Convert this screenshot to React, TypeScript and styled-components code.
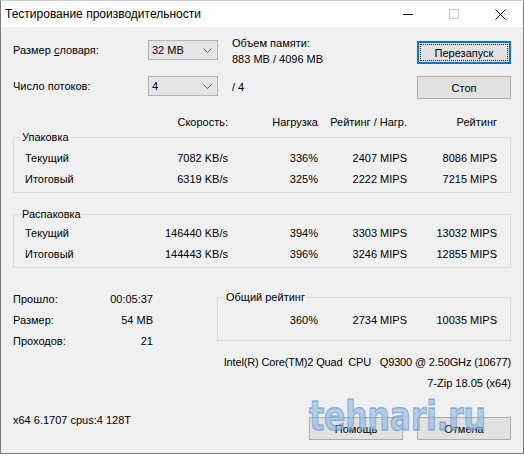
import styled, { createGlobalStyle } from 'styled-components';

const GlobalStyle = createGlobalStyle`
  html, body {
    margin: 0;
    padding: 0;
    background: #ffffff;
  }
  body {
    font-family: "Liberation Sans", Arial, sans-serif;
    font-size: 11px;
    color: #000;
  }
`;

const COLS = '103px 100px 90px 89px 90px';

const Window = styled.div`
  position: relative;
  width: 524px;
  height: 454px;
  box-sizing: border-box;
  border: 1px solid #7a7a7a;
  border-top-color: #d0d0d0;
  background: #f0f0f0;
  display: flex;
  flex-direction: column;
  overflow: hidden;
`;

const TitleBar = styled.div`
  height: 26px;
  background: #ffffff;
  display: flex;
  align-items: center;
`;

const Title = styled.div`
  flex: 1;
  padding-left: 4px;
  font-size: 12px;
  line-height: 16px;
`;

const CaptionButton = styled.div`
  width: 46px;
  height: 26px;
  display: flex;
  align-items: center;
  justify-content: center;
`;

const Body = styled.div`
  flex: 1;
  display: flex;
  flex-direction: column;
  padding: 13px 12px 13px 12px;
`;

const Top = styled.div`
  display: flex;
  align-items: flex-start;
`;

const Controls = styled.div`
  display: grid;
  grid-template-columns: 135px 70px auto;
  grid-template-rows: 20px 20px;
  row-gap: 16px;
  align-items: center;
`;

const Combo = styled.div`
  height: 20px;
  box-sizing: border-box;
  border: 1px solid #b4b4b4;
  background: #e5e5e5;
  display: flex;
  align-items: center;
  justify-content: space-between;
  padding: 0 5px 0 3px;
`;

const Info = styled.div<{ $lines?: number }>`
  margin-left: 14px;
  line-height: 16px;
  white-space: nowrap;
  margin-top: ${(p) => (p.$lines === 2 ? '2px' : '1px')};
`;

const ButtonColumn = styled.div`
  margin-left: auto;
  margin-top: 1px;
  display: flex;
  flex-direction: column;
  gap: 12px;
`;

const Button = styled.div<{ $focused?: boolean }>`
  width: 94px;
  height: 23px;
  box-sizing: border-box;
  border: 1px solid ${(p) => (p.$focused ? '#0078d7' : '#adadad')};
  box-shadow: ${(p) => (p.$focused ? 'inset 0 0 0 1px #0078d7' : 'none')};
  outline: ${(p) => (p.$focused ? '1px dotted #222' : 'none')};
  outline-offset: -4px;
  background: #e1e1e1;
  display: flex;
  align-items: center;
  justify-content: center;
`;

const Header = styled.div`
  display: grid;
  grid-template-columns: ${COLS};
  margin-top: 16px;
  padding-left: 12px;
  line-height: 14px;
  white-space: nowrap;
`;

const Cell = styled.div<{ $right?: boolean }>`
  text-align: ${(p) => (p.$right ? 'right' : 'left')};
  white-space: nowrap;
`;

const Group = styled.fieldset<{ $gap?: number; $top?: number }>`
  margin: ${(p) => p.$gap ?? 0}px 0 0 0;
  padding: ${(p) => p.$top ?? 2}px 11px 3px 11px;
  border: 1px solid #dcdcdc;
  min-width: 0;
`;

const Legend = styled.legend`
  padding: 0 1px;
  margin-left: -4px;
  line-height: 16px;
`;

const Row = styled.div<{ $cols?: string }>`
  display: grid;
  grid-template-columns: ${(p) => p.$cols ?? COLS};
  height: 21px;
  align-items: center;
`;

const Bottom = styled.div`
  display: flex;
  margin-top: 21px;
`;

const Stats = styled.div`
  width: 204px;
  flex-shrink: 0;
  margin-top: -1px;
`;

const RightColumn = styled.div`
  flex: 1;
  min-width: 0;
  display: flex;
  flex-direction: column;
`;

const TotalGroup = styled.fieldset`
  margin: 0;
  padding: 4px 12px 10px 0;
  border: 1px solid #dcdcdc;
  min-width: 0;
`;

const TotalLegend = styled.legend`
  padding: 0 1px;
  margin-left: 7px;
  line-height: 16px;
`;

const InfoLines = styled.div`
  margin-top: 11px;
  display: flex;
  flex-direction: column;
  align-items: flex-end;
  line-height: 21px;
  white-space: nowrap;
`;

const CpuLine = styled.div`
  letter-spacing: -0.15px;
`;

const Footer = styled.div`
  margin-top: auto;
  display: flex;
  align-items: flex-start;
`;

const FooterText = styled.div`
  margin-top: -5px;
  line-height: 16px;
`;

const FooterButtons = styled.div`
  margin-left: auto;
  display: flex;
  gap: 14px;
`;

const Watermark = styled.div`
  position: absolute;
  left: 308px;
  top: 391px;
  font-family: "DejaVu Sans", Verdana, sans-serif;
  font-weight: 700;
  font-size: 32px;
  line-height: 36px;
  letter-spacing: -0.5px;
  color: rgba(140, 182, 228, 0.6);
  -webkit-text-stroke: 1px rgba(70, 130, 200, 0.5);
  transform: scaleY(1.3);
  transform-origin: top left;
  pointer-events: none;
`;

const Chevron = () => (
  <svg width="9" height="5" viewBox="0 0 9 5">
    <path d="M0.5 0.5 L4.5 4.5 L8.5 0.5" fill="none" stroke="#606060" strokeWidth="1" />
  </svg>
);

const sections = [
  {
    name: 'Упаковка',
    rows: [
      ['Текущий', '7082 KB/s', '336%', '2407 MIPS', '8086 MIPS'],
      ['Итоговый', '6319 KB/s', '325%', '2222 MIPS', '7215 MIPS'],
    ],
  },
  {
    name: 'Распаковка',
    rows: [
      ['Текущий', '146440 KB/s', '394%', '3303 MIPS', '13032 MIPS'],
      ['Итоговый', '144443 KB/s', '396%', '3246 MIPS', '12855 MIPS'],
    ],
  },
];

const stats = [
  ['Прошло:', '00:05:37'],
  ['Размер:', '54 MB'],
  ['Проходов:', '21'],
];

export default function App() {
  return (
    <>
      <GlobalStyle />
      <Window>
        <TitleBar>
          <Title>Тестирование производительности</Title>
          <CaptionButton>
            <svg width="10" height="10" viewBox="0 0 10 10">
              <path d="M0 5.5 H10" stroke="#000" strokeWidth="1" />
            </svg>
          </CaptionButton>
          <CaptionButton>
            <svg width="10" height="10" viewBox="0 0 10 10">
              <rect x="0.5" y="0.5" width="9" height="9" fill="none" stroke="#c8c8c8" strokeWidth="1" />
            </svg>
          </CaptionButton>
          <CaptionButton>
            <svg width="11" height="11" viewBox="0 0 11 11">
              <path d="M0.5 0.5 L10.5 10.5 M10.5 0.5 L0.5 10.5" stroke="#000" strokeWidth="1" />
            </svg>
          </CaptionButton>
        </TitleBar>

        <Body>
          <Top>
            <Controls>
              <div>
                Размер <u>с</u>ловаря:
              </div>
              <Combo>
                <span>32 MB</span>
                <Chevron />
              </Combo>
              <Info $lines={2}>
                Объем памяти:
                <br />
                883 MB / 4096 MB
              </Info>
              <div>Число потоков:</div>
              <Combo>
                <span>4</span>
                <Chevron />
              </Combo>
              <Info>/ 4</Info>
            </Controls>
            <ButtonColumn>
              <Button $focused>Перезапуск</Button>
              <Button>Стоп</Button>
            </ButtonColumn>
          </Top>

          <Header>
            <Cell />
            <Cell $right>Скорость:</Cell>
            <Cell $right>Нагрузка</Cell>
            <Cell $right>Рейтинг / Нагр.</Cell>
            <Cell $right>Рейтинг</Cell>
          </Header>

          {sections.map((s, i) => (
            <Group key={s.name} $gap={i === 0 ? 0 : 13} $top={i === 0 ? 2 : 0}>
              <Legend>{s.name}</Legend>
              {s.rows.map((r) => (
                <Row key={r[0]}>
                  {r.map((v, j) => (
                    <Cell key={j} $right={j > 0}>
                      {v}
                    </Cell>
                  ))}
                </Row>
              ))}
            </Group>
          ))}

          <Bottom>
            <Stats>
              {stats.map(([k, v]) => (
                <Row key={k} $cols="80px 60px">
                  <Cell>{k}</Cell>
                  <Cell $right>{v}</Cell>
                </Row>
              ))}
            </Stats>
            <RightColumn>
              <TotalGroup>
                <TotalLegend>Общий рейтинг</TotalLegend>
                <Row $cols="100px 89px 90px">
                  <Cell $right>360%</Cell>
                  <Cell $right>2734 MIPS</Cell>
                  <Cell $right>10035 MIPS</Cell>
                </Row>
              </TotalGroup>
              <InfoLines>
                <CpuLine>Intel(R) Core(TM)2 Quad&nbsp; CPU&nbsp;&nbsp; Q9300 @ 2.50GHz (10677)</CpuLine>
                <div>7-Zip 18.05 (x64)</div>
              </InfoLines>
            </RightColumn>
          </Bottom>

          <Footer>
            <FooterText>x64 6.1707 cpus:4 128T</FooterText>
            <FooterButtons>
              <Button>Помощь</Button>
              <Button>Отмена</Button>
            </FooterButtons>
          </Footer>
        </Body>
        <Watermark>tehnari.ru</Watermark>
      </Window>
    </>
  );
}
